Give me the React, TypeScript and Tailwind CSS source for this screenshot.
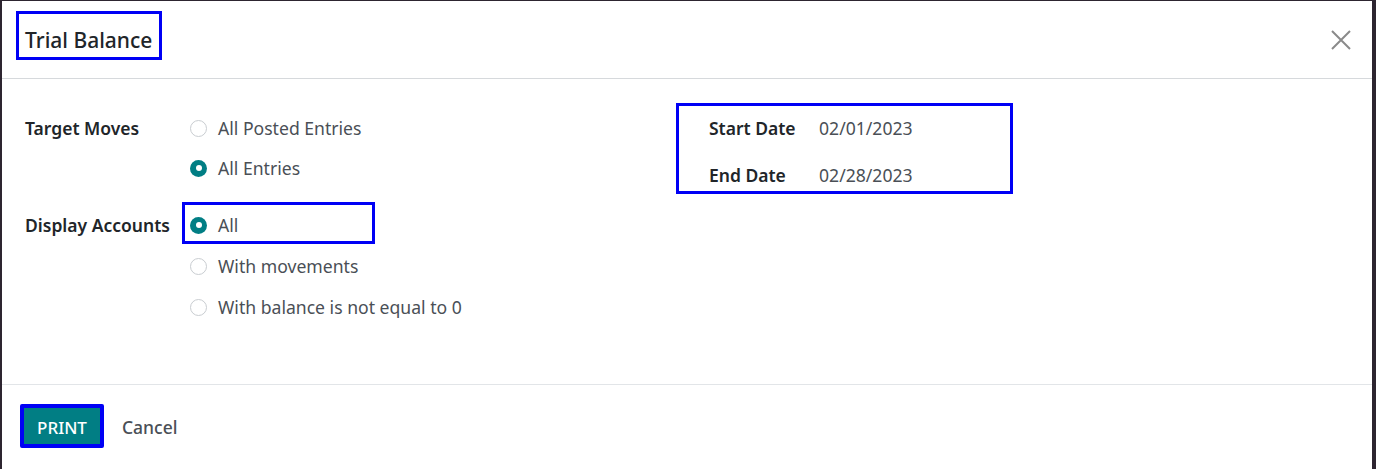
import React from "react";

const BLUE = "border-[#0000f5]";

function Radio({ checked }: { checked?: boolean }) {
  return checked ? (
    <span className="flex h-[17px] w-[17px] shrink-0 items-center justify-center rounded-full bg-[#017e84]">
      <span className="h-[6px] w-[6px] rounded-full bg-white" />
    </span>
  ) : (
    <span className="h-[17px] w-[17px] shrink-0 rounded-full border border-[#c9cdd1] bg-white" />
  );
}

function Option({ label, checked, boxed }: { label: string; checked?: boolean; boxed?: boolean }) {
  return (
    <div className="relative flex h-[40px] items-center gap-[11px]">
      <Radio checked={checked} />
      <span className="text-[17.6px] text-[#4a4f56]">{label}</span>
      {boxed && (
        <span className={`pointer-events-none absolute left-[-8px] top-[-3px] h-[42px] w-[193px] border-[3px] ${BLUE}`} />
      )}
    </div>
  );
}

export default function App() {
  return (
    <div
      className="flex h-[469px] w-[1376px] bg-[#2d2530] pl-[2px] pr-[4px] pt-[1px]"
      style={{ fontFamily: '"Noto Sans", "Open Sans", sans-serif' }}
    >
      <div className="flex flex-1 flex-col bg-white">
        {/* header */}
        <div className="relative flex h-[78px] items-center justify-between border-b border-[#d6d9dc] pl-[23px] pr-[20px]">
          <h1 className="relative pt-[2px] text-[21px] font-medium text-[#212529]">
            Trial Balance
            <span className={`pointer-events-none absolute left-[-9px] top-[-12px] h-[49px] w-[146px] border-[3px] ${BLUE}`} />
          </h1>
          <svg width="22" height="22" viewBox="0 0 22 22" className="text-[#8a8a8a]">
            <path d="M2 2 L20 20 M20 2 L2 20" stroke="currentColor" strokeWidth="2" />
          </svg>
        </div>

        {/* body */}
        <div className="flex h-[305px] pl-[23px] pt-[29px]">
          <div className="w-[684px]">
            <div className="flex">
              <div className="flex h-[40px] w-[165px] items-center text-[17.5px] font-semibold text-[#212529]">Target Moves</div>
              <div className="flex flex-col">
                <Option label="All Posted Entries" />
                <Option label="All Entries" checked />
              </div>
            </div>
            <div className="mt-[17px] flex">
              <div className="flex h-[40px] w-[165px] items-center text-[17.5px] font-semibold text-[#212529]">Display Accounts</div>
              <div className="flex flex-col gap-[1px]">
                <Option label="All" checked boxed />
                <Option label="With movements" />
                <Option label="With balance is not equal to 0" />
              </div>
            </div>
          </div>
          <div className="relative flex flex-col">
            <span className={`pointer-events-none absolute left-[-33px] top-[-5px] h-[91px] w-[337px] border-[3px] ${BLUE}`} />
            <div className="flex h-[40px] items-center">
              <span className="w-[110px] text-[17.5px] font-semibold text-[#212529]">Start Date</span>
              <span className="text-[17.6px] text-[#4a4f56]">02/01/2023</span>
            </div>
            <div className="mt-[7px] flex h-[40px] items-center">
              <span className="w-[110px] text-[17.5px] font-semibold text-[#212529]">End Date</span>
              <span className="text-[17.6px] text-[#4a4f56]">02/28/2023</span>
            </div>
          </div>
        </div>

        {/* footer */}
        <div className="flex flex-1 items-start gap-[22px] border-t border-[#e2e5e8] pl-[22px] pt-[23px]">
          <button className="relative h-[36px] w-[76px] bg-[#017e84] pt-[3px] text-[17px] font-medium text-white">
            PRINT
            <span className={`pointer-events-none absolute left-[-4px] top-[-4px] h-[44px] w-[84px] rounded-[2px] border-[4px] ${BLUE}`} />
          </button>
          <button className="flex h-[38px] items-center pt-[1px] text-[17.5px] font-medium text-[#4a4f56]">Cancel</button>
        </div>
      </div>
    </div>
  );
}
